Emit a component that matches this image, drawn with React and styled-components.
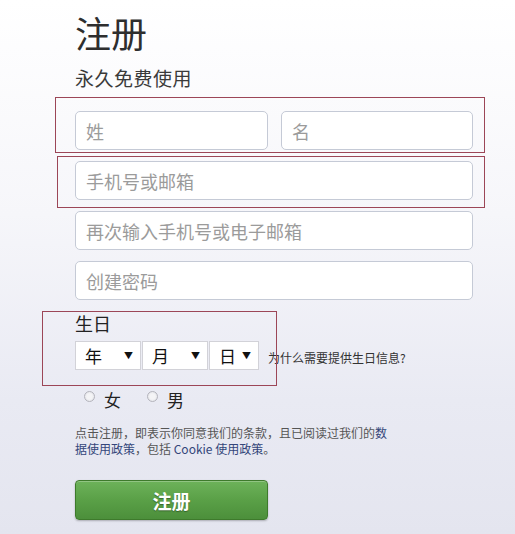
import React from "react";
import styled, { createGlobalStyle } from "styled-components";

const GlobalStyle = createGlobalStyle`
  html, body {
    margin: 0;
    padding: 0;
    width: 100%;
    height: 100%;
  }
  body {
    font-family: "Noto Sans CJK SC", "Noto Sans", sans-serif;
    background: linear-gradient(180deg, #ffffff 0%, #f6f6fa 40%, #e9eaf3 75%, #e4e5ef 100%);
    overflow: hidden;
  }
  #root { height: 100%; }
`;

const Page = styled.div`
  position: relative;
  width: 515px;
  height: 534px;
  box-sizing: border-box;
  padding-left: 75px;
  display: flex;
  flex-direction: column;
`;

const Title = styled.h1`
  margin: 10px 0 0;
  font-size: 36px;
  line-height: 44px;
  font-weight: 400;
  color: #2e2e2e;
`;

const Subtitle = styled.div`
  margin-top: 12px;
  font-size: 19px;
  line-height: 24px;
  letter-spacing: 0.5px;
  color: #3a3a3a;
`;

const Fields = styled.div`
  margin-top: 21px;
  width: 398px;
  display: flex;
  flex-direction: column;
  gap: 11px;
`;

const NameRow = styled.div`
  display: grid;
  grid-template-columns: 193px 192px;
  gap: 13px;
`;

const Input = styled.input`
  box-sizing: border-box;
  width: 100%;
  height: 39px;
  border: 1px solid #c5cad6;
  border-radius: 5px;
  background: #fff;
  padding: 0 10px;
  font-family: inherit;
  font-size: 18px;
  color: #333;
  outline: none;
  &::placeholder { color: #9b9b9b; }
`;

const Label = styled.div`
  margin-top: 12px;
  font-size: 18px;
  line-height: 22px;
  color: #222;
`;

const BirthRow = styled.div`
  margin-top: 7px;
  display: flex;
  align-items: center;
`;

const Selects = styled.div`
  display: flex;
  gap: 1px;
`;

const SelectBox = styled.div`
  box-sizing: border-box;
  width: ${(p) => p.$w}px;
  height: 29px;
  border: 1px solid #d2d2d8;
  background: #fff;
  display: flex;
  align-items: center;
  justify-content: space-between;
  padding: 0 7px 0 9px;
  font-size: 17px;
  color: #111;
`;

const Arrow = styled.span`
  font-size: 9px;
  color: #111;
`;

const WhyLink = styled.span`
  margin-left: 9px;
  margin-top: 3px;
  font-size: 12px;
  color: #333;
`;

const GenderRow = styled.div`
  margin-top: 17px;
  margin-left: 9px;
  display: flex;
  align-items: center;
  height: 24px;
`;

const Radio = styled.span`
  box-sizing: border-box;
  width: 11px;
  height: 11px;
  border-radius: 50%;
  border: 1px solid #b4b4bc;
  background: radial-gradient(circle, #f4f4f6 40%, #dcdde3 100%);
  margin-right: 9px;
  margin-bottom: 6px;
`;

const Gender = styled.span`
  font-size: 17px;
  color: #222;
  margin-right: 26px;
`;

const Terms = styled.p`
  margin: 14px 0 0;
  width: 316px;
  font-size: 12px;
  line-height: 16px;
  color: #555;
`;

const TermLink = styled.span`
  color: #34467a;
`;

const SubmitButton = styled.button`
  margin-top: 23px;
  width: 193px;
  height: 40px;
  border: 1px solid #3e7a2c;
  border-radius: 4px;
  background: linear-gradient(180deg, #6db25a 0%, #5aa047 50%, #4c8f3b 100%);
  box-shadow: 0 1px 2px rgba(0, 0, 0, 0.25), inset 0 1px 0 rgba(255, 255, 255, 0.25);
  color: #fff;
  font-family: inherit;
  font-size: 19px;
  font-weight: 700;
  text-shadow: 0 1px 1px rgba(0, 0, 0, 0.35);
  cursor: pointer;
`;

const Annotation = styled.div`
  position: absolute;
  left: ${(p) => p.$x}px;
  top: ${(p) => p.$y}px;
  width: ${(p) => p.$w}px;
  height: ${(p) => p.$h}px;
  box-sizing: border-box;
  border: 1px solid #9c4657;
  pointer-events: none;
`;

export default function App() {
  return (
    <>
      <GlobalStyle />
      <Page>
        <Title>注册</Title>
        <Subtitle>永久免费使用</Subtitle>
        <Fields>
          <NameRow>
            <Input placeholder="姓" />
            <Input placeholder="名" />
          </NameRow>
          <Input placeholder="手机号或邮箱" />
          <Input placeholder="再次输入手机号或电子邮箱" />
          <Input placeholder="创建密码" type="text" />
        </Fields>
        <Label>生日</Label>
        <BirthRow>
          <Selects>
            <SelectBox $w={66}>年<Arrow>▼</Arrow></SelectBox>
            <SelectBox $w={66}>月<Arrow>▼</Arrow></SelectBox>
            <SelectBox $w={50}>日<Arrow>▼</Arrow></SelectBox>
          </Selects>
          <WhyLink>为什么需要提供生日信息?</WhyLink>
        </BirthRow>
        <GenderRow>
          <Radio />
          <Gender>女</Gender>
          <Radio />
          <Gender>男</Gender>
        </GenderRow>
        <Terms>
          点击注册，即表示你同意我们的条款，且已阅读过我们的<TermLink>数据使用政策</TermLink>，包括 <TermLink>Cookie 使用政策</TermLink>。
        </Terms>
        <SubmitButton>注册</SubmitButton>
        <Annotation $x={55} $y={97} $w={430} $h={56} />
        <Annotation $x={57} $y={156} $w={428} $h={52} />
        <Annotation $x={42} $y={311} $w={235} $h={75} />
      </Page>
    </>
  );
}
